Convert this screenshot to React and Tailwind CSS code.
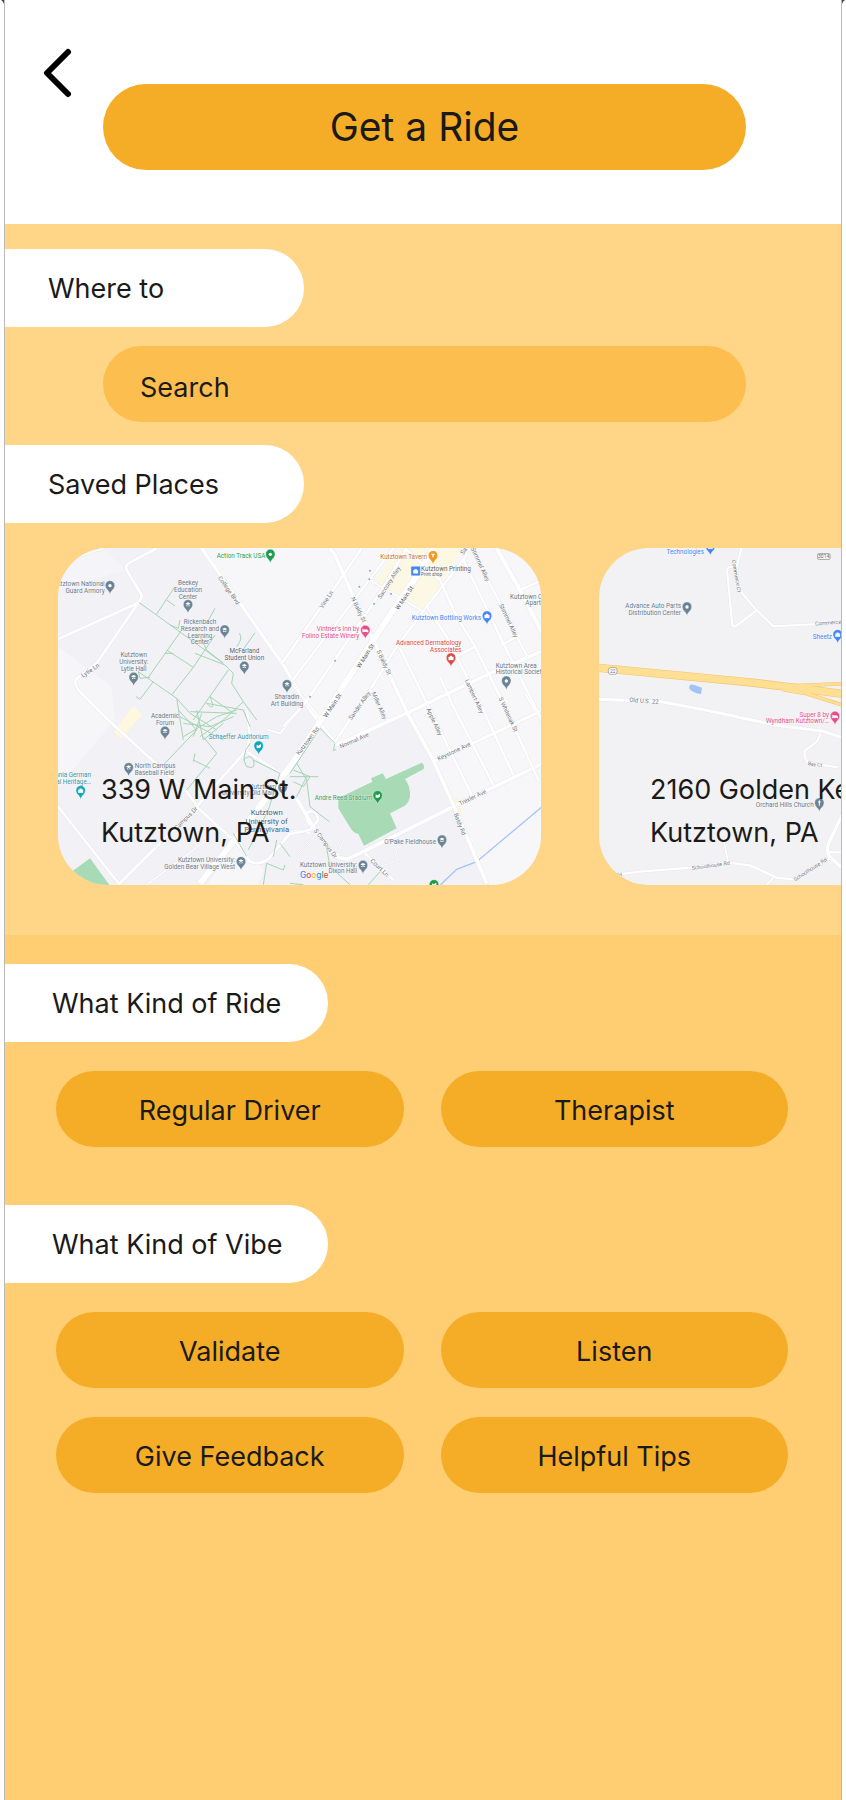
const SLATE = '#6b8394';
const GREEN = '#1e9e4a';
const BLUE = '#4285f4';
const TEAL = '#12a5bd';
const PINK = '#ea4c89';
const RED = '#db4b46';
const ORANGE = '#f29a1f';

function Glyph({ kind }) {
  if (kind === 'cap') return <path d="M-8 -3 L0 -7 L8 -3 L0 1 Z M-5 1 L0 4 L5 1 V5 H-5 Z" fill="#fff" />;
  if (kind === 'bag') return <path d="M-7 -3 H7 V6 H-7 Z M-3 -3 V-6 H3 V-3" fill="#fff" stroke="#fff" strokeWidth="1" />;
  if (kind === 'bed') return <path d="M-8 -5 V6 M-8 3 H8 V6 M-6 -2 H4 Q8 -2 8 3 H-6 Z" fill="#fff" stroke="#fff" strokeWidth="2" />;
  if (kind === 'cup') return <path d="M-6 -6 H6 L2 0 V5 H-2 V0 Z" fill="#fff" />;
  if (kind === 'church') return <path d="M0 -8 V8 M-4 -3 H4" stroke="#fff" strokeWidth="3" />;
  if (kind === 'flag') return <path d="M-6 6 L-6 -4 L-1 -1 L7 -6 V3 Q0 8 -6 6 Z" fill="#fff" />;
  return <circle r="5" fill="#fff" />;
}

function Pin({ x, y, color = SLATE, kind = 'cap' }) {
  return (
    <g transform={`translate(${x} ${y})`}>
      <path d="M0 26 C-2 14 -14 12 -14 -1 A14 14 0 0 1 14 -1 C14 12 2 14 0 26 Z" fill={color} stroke="#fff" strokeWidth="1" />
      <Glyph kind={kind} />
    </g>
  );
}

function Label({ x, y, lines, color = '#697987', anchor = 'middle', size = 19, step = 20 }) {
  return (
    <text x={x} y={y} fill={color} fontSize={size} textAnchor={anchor} stroke="#fff" strokeWidth="2" strokeOpacity="0.7" paintOrder="stroke">
      {lines.map((line, i) => (
        <tspan key={line} x={x} dy={i ? step : 0}>{line}</tspan>
      ))}
    </text>
  );
}

function Street({ x, y, turn, children, color = '#707478', size = 18 }) {
  return (
    <text transform={`translate(${x} ${y}) rotate(${turn})`} fill={color} fontSize={size} textAnchor="middle" dominantBaseline="central" stroke="#fff" strokeWidth="2" paintOrder="stroke">
      {children}
    </text>
  );
}

function Roads({ roads }) {
  return (
    <g fill="none" strokeLinejoin="round">
      {roads.map(([d, w]) => <path key={d} d={d} stroke="#e7e8ed" strokeWidth={w + 3} />)}
      {roads.map(([d, w]) => <path key={d} d={d} stroke="#fff" strokeWidth={w} />)}
    </g>
  );
}

const westRoads = [
  ['M455 25 L700 375 L780 510 L860 615', 10],
  ['M320 25 L235 70 Q225 76 230 90 L275 165 Q275 178 265 188 L140 370 L80 415 Q70 430 85 450 L175 540 L410 755 L440 795', 8],
  ['M25 297 L265 188', 8],
  ['M25 70 L160 25', 4],
];

const townRoads = [
  ['M-25 370 L0 335 L215 25', 8],
  ['M310 25 L200 170 L0 430', 7],
  ['M350 25 L250 190 L45 490 L-20 560', 8],
  ['M240 120 L400 215', 6],
  ['M0 425 L90 535', 6],
  ['M520 25 L530 45 L410 200 L320 320 L240 450 L135 605', 8],
  ['M410 200 L470 290 L580 510 L670 705', 8],
  ['M330 325 L430 530 L545 765', 8],
  ['M240 450 L295 545', 6],
  ['M450 410 L485 490 L610 735', 8],
  ['M345 25 L450 120 L500 230 L555 320 L640 490 L745 720', 8],
  ['M520 60 L640 310 L700 430 L760 550', 8],
  ['M545 25 L620 170 L680 290 L715 355', 7],
  ['M690 150 L752 122', 8],
  ['M635 315 L690 285', 8],
  ['M500 350 L555 320', 8],
  ['M705 460 L740 520', 6],
  ['M620 25 L690 150 L760 285', 13],
  ['M752 335 L600 400 L360 515 L140 615', 11],
  ['M430 665 L750 515', 9],
  ['M120 25 L135 45 L195 180 L250 300 L350 515 L430 660 L490 795 L590 1030', 11],
  ['M430 25 L400 80 L330 180 L250 300 L100 530 L0 680 L-190 930 L-270 1030', 18],
];

const campusRoads = [
  ['M440 290 L205 524', 8],
  ['M440 290 L590 120 L600 80 L590 0', 8],
  ['M590 125 L700 195', 8],
  ['M650 58 L690 70 L750 0', 6],
  ['M25 290 L190 500 L210 524', 7],
  ['M410 240 L440 290 L560 400 L600 455 Q640 470 665 435 L720 370 Q740 355 780 370', 8],
  ['M290 524 L470 390', 4],
];

const stadiumRoads = [
  ['M755 162 L490 290 L220 425 L170 448 L140 440 L80 370 L20 265', 11],
  ['M0 372 L60 360 L85 330 Q80 300 55 305 Q40 320 60 345', 7],
  ['M225 430 L310 510', 7],
  ['M20 430 L60 390 M140 440 L165 380 M315 410 L325 450 L270 470', 3],
];

function DowntownMap() {
  return (
    <svg viewBox="0 0 1449 1011" preserveAspectRatio="xMidYMid slice" className="block h-full w-full" fontFamily="Roboto, sans-serif" role="img" aria-label="Map of Kutztown">
      <rect width="1449" height="1011" fill="#f1f1f6" />
      <g transform="translate(-24 -24)">
        <path d="M455 25 L700 375 L780 510 L860 615 L1080 515 L1210 795 L1320 1040 H1480 V20 Z" fill="#f7f7fa" />
        <path d="M25 320 L185 440 L195 540 L25 740 Z" fill="#f6f6f9" />
        <path d="M25 25 H160 L225 90 L25 150 Z" fill="#f5f5f9" />
        <path d="M250 498 L275 525 L212 597 L192 575 Z" fill="#fff7de" />
      </g>
      <path transform="translate(696 -24)" d="M335 25 H520 L455 130 L405 215 L330 180 L250 125 L300 60 Z" fill="#fdf8e4" />
      <g transform="translate(-24 486)">
        <path d="M120 445 L182 530 H20 L65 485 Z" fill="#a8dab5" />
        <path d="M470 524 L560 400 L640 480 L625 524 Z" fill="#f7f7fa" />
      </g>
      <g transform="translate(696 486)">
        <path d="M485 265 H502 L520 320 L505 326 Z" fill="#fff5dc" />
        <path d="M145 265 L247 215 L243 205 L278 190 L288 207 L395 158 Q405 165 401 177 L345 207 Q362 230 360 260 Q355 285 330 295 L300 310 L320 355 L222 407 L205 372 Q190 370 180 352 L145 295 Z" fill="#a8dab5" />
        <path d="M450 526 L500 478 L560 455 L755 291" fill="none" stroke="#a6c5f8" strokeWidth="4" />
      </g>

      <g transform="translate(-24 486)"><Roads roads={campusRoads} /></g>
      <g transform="translate(696 486)"><Roads roads={stadiumRoads} /></g>
      <g transform="translate(-24 -24)"><Roads roads={westRoads} /></g>
      <g transform="translate(696 -24)"><Roads roads={townRoads} /></g>

      <g fill="none" stroke="#a5d4b4" strokeWidth="3">
        <path transform="translate(-24 -24)" d="M268 188 L520 370 M375 140 L320 222 M350 180 L375 198 M495 205 L470 250 M390 240 L385 265 L360 255 M395 270 L295 412 M350 330 L430 382 M345 340 L370 340 M310 425 L270 478 L258 470 M265 395 L380 475 L420 520 L500 570 M265 395 L270 415 L300 412 M495 285 L430 382 L365 465 M435 340 L525 375 L550 400 L545 430 L580 485 L620 540 M535 390 L430 540 M615 278 L575 335 M568 280 Q580 295 560 320 M450 290 L470 330 L520 370 M480 470 L550 520 M470 490 Q500 520 480 470 M470 490 L580 510 M380 475 L400 600 M420 515 L560 520 M580 485 L520 540 L450 590" />
        <path transform="translate(-24 486)" d="M385 0 L440 60 L340 165 M400 80 L500 20 L560 0 M440 0 L460 90 L520 40 M390 20 L520 90 M400 40 L480 50 L550 20 M455 10 L430 80 M460 80 L500 130 L410 240 M430 150 L480 175 M435 130 L430 155 M580 0 L600 50 M600 100 Q570 140 590 170 Q620 180 610 150 Q600 130 580 150 M610 150 L690 190 M550 370 L590 440 M690 400 L720 440 M640 524 L650 460 L700 480 L705 465 M690 190 L655 300 L595 420 M680 390 L670 440" />
        <path transform="translate(696 486)" d="M90 55 L0 190 M90 55 L135 100 L130 122 L138 118 M20 160 L50 210 L60 290 L118 335 M0 200 L85 200 M50 200 L20 260 M10 180 L60 200 L40 230 L10 215 M110 415 L120 470 L180 524 M235 524 L275 480 M0 520 L40 524" />
      </g>

      <g fill="#8ea2dd" transform="translate(696 -24)">
        <circle cx="240" cy="92" r="3" /><circle cx="208" cy="140" r="3" /><circle cx="238" cy="118" r="3" />
        <circle cx="303" cy="162" r="3" /><circle cx="252" cy="191" r="3" /><circle cx="135" cy="362" r="3" /><circle cx="60" cy="470" r="3" />
      </g>

      <g transform="translate(-24 -24)">
        <Street x={538} y={150} turn={55}>College Blvd</Street>
        <Street x={120} y={390} turn={-34}>Lytle Ln</Street>
        <Label x={646} y={54} anchor="end" color={GREEN} lines={['Action Track USA']} />
        <Pin x={661} y={43} color={GREEN} kind="dot" />
        <Label x={164} y={139} anchor="end" lines={['Kutztown National', 'Guard Armory']} />
        <Pin x={180} y={137} kind="dot" />
        <Label x={414} y={136} lines={['Beekey', 'Education', 'Center']} />
        <Pin x={414} y={194} />
        <Label x={450} y={253} lines={['Rickenbach', 'Research and', 'Learning', 'Center']} />
        <Pin x={524} y={270} />
        <Label x={583} y={340} lines={['McFarland', 'Student Union']} color="#566673" />
        <Pin x={583} y={379} />
        <Label x={251} y={352} lines={['Kutztown', 'University:', 'Lytle Hall']} />
        <Pin x={251} y={412} />
        <Label x={711} y={478} lines={['Sharadin', 'Art Building']} />
        <Pin x={711} y={434} />
      </g>

      <g transform="translate(696 -24)">
        <Street x={108} y={178} turn={-57}>Vine Ln</Street>
        <Street x={296} y={127} turn={-57}>Saccony Alley</Street>
        <Street x={342} y={173} turn={-56} color="#55595d">W Main St</Street>
        <Street x={207} y={208} turn={65}>N Baldy St</Street>
        <Street x={225} y={347} turn={-57} color="#55595d">W Main St</Street>
        <Street x={283} y={366} turn={65}>S Baldy St</Street>
        <Street x={126} y={496} turn={-56} color="#55595d">W Main St</Street>
        <Street x={207} y={496} turn={-55}>Sander Alley</Street>
        <Street x={269} y={496} turn={66}>Miller Alley</Street>
        <Street x={572} y={72} turn={65}>Stimmel Alley</Street>
        <Street x={657} y={241} turn={65}>Stimmel Alley</Street>
        <Street x={554} y={468} turn={65}>Lambert Alley</Street>
        <Street x={520} y={32} turn={-57}>Sa</Street>
        <Street x={656} y={523} turn={65}>S Whiteoak St</Street>
        <Street x={434} y={545} turn={65}>Apple Alley</Street>
        <Label x={411} y={57} anchor="end" color="#c9762c" lines={['Kutztown Tavern']} />
        <Pin x={429} y={47} color={ORANGE} kind="cup" />
        <rect x="363" y="79" width="28" height="28" rx="3" fill={BLUE} stroke="#fff" />
        <g transform="translate(377 94)"><Glyph kind="bag" /></g>
        <Label x={393} y={92} anchor="start" color="#5f6368" lines={['Kutztown Printing']} />
        <Label x={393} y={109} anchor="start" color="#5f6368" size={14} lines={['Print shop']} />
        <Label x={573} y={239} anchor="end" color={BLUE} lines={['Kutztown Bottling Works']} />
        <Pin x={591} y={228} color={BLUE} kind="bag" />
        <Label x={208} y={273} anchor="end" color={PINK} lines={["Vintner's Inn by", 'Folino Estate Winery']} />
        <Pin x={226} y={271} color={PINK} kind="bed" />
        <Label x={514} y={316} anchor="end" color={RED} lines={['Advanced Dermatology', 'Associates']} />
        <Pin x={483} y={354} color={RED} kind="bag" />
        <Label x={617} y={383} anchor="start" lines={['Kutztown Area', 'Historical Society']} />
        <Pin x={649} y={423} kind="dot" />
        <Label x={660} y={177} anchor="start" lines={['Kutztown Campus']} />
        <Label x={706} y={196} anchor="start" lines={['Apartments']} />
      </g>

      <g transform="translate(-24 486)">
        <Street x={407} y={323} turn={-45}>Campus Dr</Street>
        <Label x={345} y={25} lines={['Academic', 'Forum']} />
        <Pin x={345} y={64} />
        <Label x={566} y={88} color="#3596a6" lines={['Schaeffer Auditorium']} />
        <Pin x={626} y={108} color={TEAL} kind="flag" />
        <Label x={254} y={175} anchor="start" lines={['North Campus', 'Baseball Field']} />
        <Pin x={236} y={173} />
        <Label x={123} y={202} anchor="end" color="#3596a6" lines={['Pennsylvania German', 'Cultural Heritage…']} />
        <Pin x={92} y={242} color={TEAL} kind="bag" />
        <Label x={678} y={236} anchor="end" lines={['Kutztown', 'University Old Main']} />
        <Pin x={698} y={233} />
        <Label x={650} y={315} size={23} step={26} color="#46657c" lines={['Kutztown', 'University of', 'Pennsylvania']} />
        <Label x={555} y={457} anchor="end" lines={['Kutztown University:', 'Golden Bear Village West']} />
        <Pin x={573} y={455} />
      </g>

      <g transform="translate(696 486)">
        <Street x={52} y={92} turn={-53}>Kutztown Rd</Street>
        <Street x={192} y={90} turn={-24}>Normal Ave</Street>
        <Street x={491} y={123} turn={-25}>Keystone Ave</Street>
        <Street x={547} y={261} turn={-26}>Trexler Ave</Street>
        <Street x={511} y={342} turn={68}>Baldy Rd</Street>
        <Street x={108} y={399} turn={53}>S Campus Dr</Street>
        <Street x={270} y={472} turn={44}>Court Ln</Street>
        <Label x={246} y={270} anchor="end" color="#3f9a60" lines={['Andre Reed Stadium']} />
        <Pin x={263} y={257} color={GREEN} kind="flag" />
        <Label x={438} y={402} anchor="end" lines={["O'Pake Fieldhouse"]} />
        <Pin x={456} y={390} />
        <Label x={201} y={470} anchor="end" lines={['Kutztown University:', 'Dixon Hall']} />
        <Pin x={219} y={466} />
        <Pin x={432} y={524} color={GREEN} kind="flag" />
        <text x="30" y="505" fontSize="25" fontFamily="Inter, sans-serif" fontWeight="500" stroke="#fff" strokeWidth="2" paintOrder="stroke">
          <tspan fill="#4285f4">G</tspan><tspan fill="#ea4335">o</tspan><tspan fill="#fbbc05">o</tspan><tspan fill="#4285f4">g</tspan><tspan fill="#34a853">l</tspan><tspan fill="#ea4335">e</tspan>
        </text>
      </g>
    </svg>
  );
}

const highwayRoads = [
  ['M455 30 L440 90 L445 155 L500 220 L550 268 L760 258', 6],
  ['M440 90 L418 90 Q410 92 412 110 L427 265 Q430 272 440 266 L500 220', 6],
  ['M27 487 L215 494 L360 522 L560 565 L700 583 L770 606', 9],
];

const churchRoads = [
  ['M692 65 L680 90 L645 115 Q640 140 655 152 L742 166', 6],
  ['M80 487 L160 478 L310 466 L415 452 L480 460 L560 497 L610 502 L720 440', 7],
  ['M400 380 L415 452', 5],
  ['M552 495 L520 530', 5],
  ['M775 270 L720 385 Q705 415 720 435 L770 480', 10],
  ['M712 420 L770 422', 7],
];

function HighwayMap() {
  return (
    <svg viewBox="0 0 1449 1011" preserveAspectRatio="xMidYMid slice" className="block h-full w-full" fontFamily="Roboto, sans-serif" role="img" aria-label="Map of Golden Key Road">
      <rect width="1449" height="1011" fill="#f2f2f4" />
      <g transform="translate(-27 492)"><Roads roads={churchRoads} /></g>
      <g transform="translate(-27 -33)">
        <Roads roads={highwayRoads} />
        <g fill="none">
          <path d="M560 448 L770 440 M580 458 L650 470 L770 508" stroke="#f3c46c" strokeWidth="11" />
          <path d="M20 392 L480 436 L770 472" stroke="#f3c46c" strokeWidth="25" />
          <path d="M560 448 L770 440 M580 458 L650 470 L770 508" stroke="#ffdf94" strokeWidth="8" />
          <path d="M20 392 L480 436 L770 472" stroke="#ffdf94" strokeWidth="21" />
        </g>
        <rect x="55" y="392" width="26" height="20" rx="7" fill="#fff" stroke="#8b8b8b" strokeWidth="2" />
        <text x="68" y="407" fontSize="14" fill="#5f6368" textAnchor="middle">22</text>
        <path d="M298 446 Q305 440 315 445 L336 452 L333 471 Q310 468 298 455 Z" fill="#a3c2f9" />
        <Street x={162} y={490} turn={4}>Old U.S. 22</Street>
        <Street x={440} y={117} turn={80} size={16}>Commerce Ct</Street>
        <Street x={724} y={256} turn={-4} size={16}>Commerce Ct</Street>
        <Label x={342} y={50} anchor="end" color={BLUE} lines={['Technologies']} />
        <Pin x={361} y={29} color={BLUE} kind="bag" />
        <Label x={273} y={213} anchor="end" lines={['Advance Auto Parts', 'Distribution Center']} />
        <Pin x={291} y={210} kind="dot" />
        <rect x="683" y="50" width="37" height="17" rx="3" fill="#fff" stroke="#777" strokeWidth="2" />
        <text x="701" y="64" fontSize="15" fill="#5f6368" textAnchor="middle">3014</text>
        <Label x={726} y={306} anchor="end" color={BLUE} lines={['Sheetz']} />
        <Pin x={743} y={293} color={BLUE} kind="bag" />
      </g>
      <g transform="translate(-27 492)">
        <Label x={717} y={14} anchor="end" color={PINK} lines={['Super 8 by', 'Wyndham Kutztown/…']} />
        <Pin x={735} y={13} color={PINK} kind="bed" />
        <Street x={675} y={156} turn={8} size={15}>Bay Ct</Street>
        <Label x={671} y={285} anchor="end" lines={['Orchard Hills Church']} />
        <Pin x={688} y={273} kind="church" />
        <Street x={362} y={460} turn={-8} size={16}>Schoolhouse Rd</Street>
        <Street x={660} y={472} turn={-33} size={16}>Schoolhouse Rd</Street>
        <Street x={86} y={488} turn={-4} size={16}>Rd</Street>
      </g>
    </svg>
  );
}

function SectionTab({ children, wide = false }) {
  return (
    <h2 className={`${wide ? 'w-[323px] pl-[47px]' : 'w-[299px] pl-[43px]'} flex h-[78px] items-center rounded-r-full bg-white pt-0.5 text-[27px] whitespace-nowrap`}>
      {children}
    </h2>
  );
}

function Choices({ options }) {
  return (
    <div className="mt-[29px] grid grid-cols-2 gap-x-[37px] gap-y-[29px] pr-[53px] pl-[51px]">
      {options.map((option) => (
        <button key={option} type="button" className="h-[76px] rounded-full bg-[#f5ad27] pt-1 text-[27px]">
          {option}
        </button>
      ))}
    </div>
  );
}

function PlaceCard({ map, street, town, inset }) {
  return (
    <li className="w-[483px] shrink-0">
      <a href="#ride" className="relative block h-[337px] overflow-hidden rounded-[50px]">
        {map}
        <span className={`absolute bottom-[31px] text-[27px] leading-[43px] whitespace-nowrap ${inset}`}>
          {street}
          <br />
          {town}
        </span>
      </a>
    </li>
  );
}

export default function App() {
  return (
    <div className="relative min-h-screen bg-white px-1 font-['Inter',sans-serif] text-[#1b1a18] [font-optical-sizing:none]">
      <svg width="4" height="4" viewBox="0 0 4 4" className="absolute top-0 left-0" aria-hidden="true">
        <path d="M1 0 H4 V4 Q3 1 1 0 Z" fill="#444" />
      </svg>
      <svg width="4" height="4" viewBox="0 0 4 4" className="absolute top-0 right-0" aria-hidden="true">
        <path d="M3 0 H0 V4 Q1 1 3 0 Z" fill="#444" />
      </svg>
      <main className="flex min-h-screen flex-col overflow-hidden border-x border-[#b9b9b9] bg-[#ffce73]">
        <header className="relative bg-white pt-[84px] pr-[95px] pb-[54px] pl-[98px]">
          <button type="button" aria-label="Back" className="absolute top-12 left-[35px] text-black">
            <svg width="36" height="50" viewBox="0 0 36 50" fill="none" stroke="currentColor" strokeWidth="6" strokeLinecap="round" strokeLinejoin="round">
              <path d="M28 4 L7 25 L28 46" />
            </svg>
          </button>
          <h1 className="flex h-[86px] items-center justify-center rounded-full bg-[#f5ad27] text-[39px] whitespace-nowrap">
            Get a Ride
          </h1>
        </header>

        <section className="bg-[#ffd588] pt-[25px] pb-[50px]">
          <SectionTab><label htmlFor="destination">Where to</label></SectionTab>
          <div className="mt-[19px] pr-[95px] pl-[98px]">
            <input
              id="destination"
              type="search"
              placeholder="Search"
              className="block h-[76px] w-full rounded-full bg-[#fcbe4f] px-[37px] pt-1.5 text-[27px] outline-none placeholder:text-[#1b1a18] placeholder:opacity-100"
            />
          </div>
          <div className="mt-[23px]"><SectionTab>Saved Places</SectionTab></div>
          <ul className="mt-[25px] flex gap-[58px] overflow-hidden pl-[53px]">
            <PlaceCard map={<DowntownMap />} street="339 W Main St." town="Kutztown, PA" inset="left-[43px]" />
            <PlaceCard map={<HighwayMap />} street="2160 Golden Key Rd" town="Kutztown, PA" inset="left-[51px]" />
          </ul>
        </section>

        <section className="pt-[29px]">
          <SectionTab wide>What Kind of Ride</SectionTab>
          <Choices options={['Regular Driver', 'Therapist']} />
        </section>

        <section className="pt-[58px] pb-12">
          <SectionTab wide>What Kind of Vibe</SectionTab>
          <Choices options={['Validate', 'Listen', 'Give Feedback', 'Helpful Tips']} />
        </section>
      </main>
    </div>
  );
}
